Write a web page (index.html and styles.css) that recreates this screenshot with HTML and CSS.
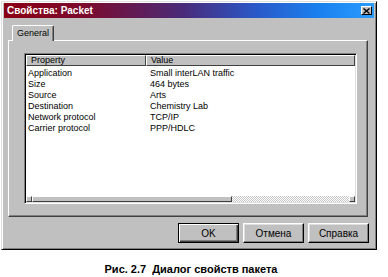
FILE: index.html
```html
<!DOCTYPE html>
<html lang="ru">
<head>
  <meta charset="UTF-8">
  <title>Свойства: Packet</title>
  <link rel="stylesheet" href="styles.css">
</head>
<body>
  <div class="dialog">
    <div class="titlebar">
      <span class="title">Свойства: Packet</span>
      <span class="close">
        <svg width="7" height="6" viewBox="0 0 7 6"><path d="M0.5 0.5 L6.5 5.5 M6.5 0.5 L0.5 5.5" stroke="#000" stroke-width="1.4"/></svg>
      </span>
    </div>
    <div class="tabs">
      <div class="tab">General</div>
    </div>
    <div class="panel">
      <div class="listbox">
        <div class="list-head">
          <div class="head-cell col-prop">Property</div>
          <div class="head-cell col-val">Value</div>
        </div>
        <div class="rows">
          <div class="row"><span class="col-prop">Application</span><span class="col-val">Small interLAN traffic</span></div>
          <div class="row"><span class="col-prop">Size</span><span class="col-val">464 bytes</span></div>
          <div class="row"><span class="col-prop">Source</span><span class="col-val">Arts</span></div>
          <div class="row"><span class="col-prop">Destination</span><span class="col-val">Chemistry Lab</span></div>
          <div class="row"><span class="col-prop">Network protocol</span><span class="col-val">TCP/IP</span></div>
          <div class="row"><span class="col-prop">Carrier protocol</span><span class="col-val">PPP/HDLC</span></div>
        </div>
        <div class="hscroll">
          <span class="arrow"></span>
          <span class="thumb"></span>
          <span class="track"></span>
          <span class="arrow"></span>
        </div>
      </div>
    </div>
    <div class="buttons">
      <button class="btn default">OK</button>
      <button class="btn">Отмена</button>
      <button class="btn">Справка</button>
    </div>
  </div>
  <p class="caption">Рис. 2.7&nbsp; Диалог свойств пакета</p>
</body>
</html>
```

FILE: styles.css
```css
body {
  margin: 0;
  background: #fff;
  font-family: "Liberation Sans", Arial, sans-serif;
}
.dialog {
  box-sizing: border-box;
  width: 376px;
  height: 249px;
  margin: 1px 0 0 1px;
  padding: 1px 2px 2px 2px;
  background: #c0c0c0;
  border: 1px solid;
  border-color: #dfdfdf #000 #000 #dfdfdf;
  box-shadow: inset 1px 1px #fff, inset -1px -1px #808080;
  display: flex;
  flex-direction: column;
}
.titlebar {
  height: 15px;
  padding: 0 2px 0 3px;
  display: flex;
  align-items: center;
  justify-content: space-between;
  background: linear-gradient(90deg, #8a0014 0%, #7c0a2e 22%, #4a2a78 48%, #2a58c8 68%, #1a80ee 85%, #2a9cff 100%);
}
.title {
  color: #fff;
  font-weight: bold;
  font-size: 10px;
}
.close {
  box-sizing: border-box;
  width: 11px;
  height: 9px;
  background: #c0c0c0;
  border: 1px solid;
  border-color: #fff #000 #000 #fff;
  display: flex;
  align-items: center;
  justify-content: center;
}
.close svg {
  display: block;
}
.tabs {
  margin-top: 7px;
  padding-left: 8px;
  display: flex;
}
.tab {
  position: relative;
  z-index: 1;
  box-sizing: border-box;
  height: 16px;
  margin-bottom: -1px;
  padding: 0 4px;
  background: #c0c0c0;
  border: 1px solid;
  border-color: #fff #404040 transparent #fff;
  border-bottom: none;
  border-radius: 2px 2px 0 0;
  box-shadow: inset -1px 0 #808080;
  font-size: 9px;
  line-height: 14px;
  color: #000;
}
.panel {
  box-sizing: border-box;
  width: 360px;
  height: 177px;
  margin-left: 4px;
  padding: 12px 0 0 15px;
  border: 1px solid;
  border-color: #fff #404040 #404040 #fff;
  box-shadow: inset -1px -1px #808080;
}
.listbox {
  box-sizing: border-box;
  width: 333px;
  height: 151px;
  padding: 1px;
  background: #fff;
  border: 1px solid;
  border-color: #808080 #fff #fff #808080;
  box-shadow: inset 1px 1px #000, inset -1px -1px #dfdfdf;
  display: flex;
  flex-direction: column;
  font-size: 9px;
  color: #000;
}
.list-head {
  display: flex;
  height: 11px;
}
.head-cell {
  box-sizing: border-box;
  height: 11px;
  padding-left: 4px;
  background: #c0c0c0;
  border: 1px solid;
  border-color: #fff #404040 #404040 #fff;
  line-height: 9px;
}
.list-head .col-prop {
  width: 120px;
}
.list-head .col-val {
  flex: 1;
}
.rows {
  flex: 1;
  padding-top: 2px;
}
.row {
  display: flex;
  height: 11px;
  line-height: 11px;
}
.row .col-prop {
  width: 118px;
  padding-left: 2px;
}
.row .col-val {
  padding-left: 4px;
}
.hscroll {
  display: flex;
  height: 6px;
}
.arrow,
.thumb {
  box-sizing: border-box;
  height: 6px;
  background: #c0c0c0;
  border: 1px solid;
  border-color: #fff #404040 #404040 #fff;
}
.arrow {
  width: 6px;
}
.thumb {
  width: 200px;
}
.track {
  flex: 1;
  background: repeating-conic-gradient(#fff 0 25%, #c8c8c8 0 50%) 0 0 / 2px 2px;
}
.buttons {
  display: flex;
  justify-content: flex-end;
  gap: 4px;
  margin-top: 6px;
  padding-right: 5px;
}
.btn {
  box-sizing: border-box;
  width: 61px;
  height: 20px;
  padding: 0;
  background: #c0c0c0;
  border: 1px solid;
  border-color: #fff #000 #000 #fff;
  box-shadow: inset -1px -1px #808080, inset 1px 1px #dfdfdf;
  font-family: "Liberation Sans", Arial, sans-serif;
  font-size: 10px;
  color: #000;
}
.btn.default {
  border-color: #000;
  box-shadow: inset 1px 1px #fff, inset -1px -1px #404040, inset -2px -2px #808080;
}
.caption {
  margin: 13px 0 0;
  padding-right: 6px;
  text-align: center;
  font-size: 11px;
  font-weight: bold;
  line-height: 13px;
  color: #000;
}
```
